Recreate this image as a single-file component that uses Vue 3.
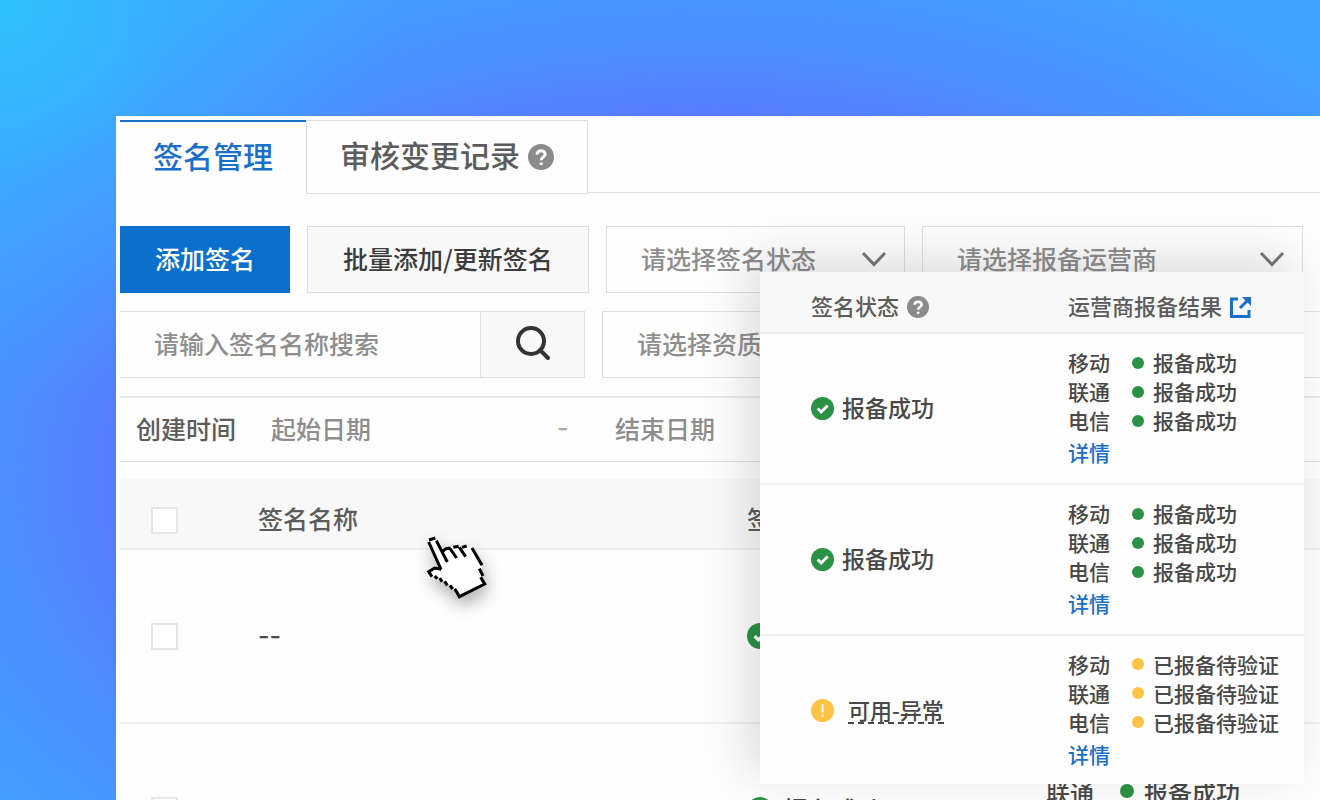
<template>
    <div class="page">
        <main class="panel">
            <nav class="tabs">
                <button type="button" class="tab active"><span>签名管理</span></button>
                <button type="button" class="tab">
                    <span>审核变更记录</span>
                    <svg class="help" viewBox="0 0 26 26" aria-hidden="true">
                        <circle cx="13" cy="13" r="13" />
                        <path d="M9 10.400C9 5.400 17.200 5.600 17.200 10.200C17.200 13 13.200 13.200 13.200 16.200" />
                        <path d="M13.200 18.600V21" />
                    </svg>
                </button>
                <div class="tabs-rest"></div>
            </nav>

            <div class="filters">
                <button type="button" class="btn primary">添加签名</button>
                <button type="button" class="btn batch">批量添加/更新签名</button>
                <div class="select-box status-select">
                    <select aria-label="签名状态">
                        <option>请选择签名状态</option>
                    </select>
                    <svg class="arrow" viewBox="0 0 26 16" aria-hidden="true"><path d="M2 2L13 13.500L24 2" /></svg>
                </div>
                <div class="select-box operator-select">
                    <select aria-label="报备运营商">
                        <option>请选择报备运营商</option>
                    </select>
                    <svg class="arrow" viewBox="0 0 26 16" aria-hidden="true"><path d="M2 2L13 13.500L24 2" /></svg>
                </div>
            </div>

            <div class="filters second">
                <div class="search">
                    <input type="text" aria-label="签名名称" placeholder="请输入签名名称搜索">
                    <button type="button" aria-label="搜索">
                        <svg viewBox="0 0 36 36" aria-hidden="true">
                            <circle cx="16" cy="16" r="13" />
                            <path d="M25 25L33 33" />
                        </svg>
                    </button>
                </div>
                <div class="select-box qualification-select">
                    <select aria-label="资质">
                        <option>请选择资质</option>
                    </select>
                </div>
            </div>

            <div class="date-row">
                <label for="start-date">创建时间</label>
                <input id="start-date" type="text" placeholder="起始日期">
                <span class="dash">-</span>
                <input type="text" aria-label="结束日期" placeholder="结束日期">
            </div>

            <table class="sign-table">
                <colgroup>
                    <col class="col-check">
                    <col class="col-name">
                    <col class="col-status">
                    <col>
                </colgroup>
                <thead>
                    <tr>
                        <th class="check-cell"><input type="checkbox" aria-label="全选"></th>
                        <th>签名名称</th>
                        <th>签名状态</th>
                        <th></th>
                    </tr>
                </thead>
                <tbody>
                    <tr v-for="row in signRows" :key="row.id">
                        <td class="check-cell"><input type="checkbox" aria-label="选择"></td>
                        <td class="name">{{ row.name }}</td>
                        <td>
                            <div class="status">
                                <svg class="status-icon" viewBox="0 0 24 24" aria-hidden="true">
                                    <circle class="green" cx="12" cy="12" r="12" />
                                    <path class="tick" d="M7 12L10.600 15.700L17.400 8.800" />
                                </svg>
                                <span>{{ row.status }}</span>
                            </div>
                        </td>
                        <td>
                            <ul class="operators">
                                <li v-for="operator in row.operators" :key="operator">
                                    <span>{{ operator }}</span><i class="dot success"></i><span>报备成功</span>
                                </li>
                            </ul>
                        </td>
                    </tr>
                </tbody>
            </table>

            <section class="result-card">
                <table class="result-table">
                    <colgroup>
                        <col class="col-result-status">
                        <col>
                    </colgroup>
                    <thead>
                        <tr>
                            <th>
                                <div class="head-cell">
                                    <span>签名状态</span>
                                    <svg class="help" viewBox="0 0 26 26" aria-hidden="true">
                                        <circle cx="13" cy="13" r="13" />
                                        <path d="M9 10.400C9 5.400 17.200 5.600 17.200 10.200C17.200 13 13.200 13.200 13.200 16.200" />
                                        <path d="M13.200 18.600V21" />
                                    </svg>
                                </div>
                            </th>
                            <th>
                                <div class="head-cell">
                                    <span>运营商报备结果</span>
                                    <svg class="external" viewBox="0 0 21 21" aria-hidden="true">
                                        <path d="M8 2H1.500V19.500H19V13" />
                                        <path d="M10 11L18 3" />
                                        <path class="head" d="M12 0H21V9Z" />
                                    </svg>
                                </div>
                            </th>
                        </tr>
                    </thead>
                    <tbody>
                        <tr v-for="result in results" :key="result.id">
                            <td>
                                <div class="status">
                                    <svg class="status-icon" viewBox="0 0 24 24" aria-hidden="true">
                                        <template v-if="result.type === 'success'">
                                            <circle class="green" cx="12" cy="12" r="12" />
                                            <path class="tick" d="M7 12L10.600 15.700L17.400 8.800" />
                                        </template>
                                        <template v-else>
                                            <circle class="yellow" cx="12" cy="12" r="12" />
                                            <path class="mark" d="M12 5.500V14M12 16.500V18.500" />
                                        </template>
                                    </svg>
                                    <span :class="{ abnormal: result.type === 'warning' }">{{ result.status }}</span>
                                </div>
                            </td>
                            <td>
                                <ul class="operators">
                                    <li v-for="operator in operators" :key="operator">
                                        <span>{{ operator }}</span><i class="dot" :class="result.type"></i><span>{{ result.report }}</span>
                                    </li>
                                </ul>
                                <a href="#" class="detail">详情</a>
                            </td>
                        </tr>
                    </tbody>
                </table>
            </section>

            <svg class="cursor" viewBox="0 0 210 216" aria-hidden="true">
                <path class="hand" d="M20 28L24 20L38 16L44 26L62 57L84 46L110 42L134 42L150 48L180 100L180 130L188 156L112 194L88 165L55 138L30 132L20 118L38 108L58 113Z" />
                <path d="M21 24L40 18M20 30L57 112M43 26L76 90M62 58L72 50L86 48M84 50L104 78M94 46L110 43M112 46L131 74M120 46L134 42M150 48L180 100M172 110L183 132M176 136L188 156L112 194L103 178M58 112L38 108L20 119L30 134M38 132L46 140M53 138L60 149M68 148L76 160M84 160L92 171M98 170L104 180" />
            </svg>
        </main>
    </div>
</template>

<script setup>
import { ref } from 'vue';

const operators = ['移动', '联通', '电信'];

const signRows = ref([
    { id: 1, name: '--', status: '', operators: [] },
    { id: 2, name: '', status: '报备成功', operators: ['联通'] },
]);

const results = ref([
    { id: 1, type: 'success', status: '报备成功', report: '报备成功' },
    { id: 2, type: 'success', status: '报备成功', report: '报备成功' },
    { id: 3, type: 'warning', status: '可用-异常', report: '已报备待验证' },
]);
</script>

<style>
body {
    margin: 0;
}
</style>

<style scoped>
* {
    box-sizing: border-box;
}

.page {
    display: flex;
    height: 100vh;
    padding: 116px 0 0 116px;
    overflow: hidden;
    font-family: "Noto Sans CJK SC", sans-serif;
    font-size: 25px;
    font-weight: 500;
    color: #484848;
    background:
        radial-gradient(circle at 0 0, #2ec2ff 0, rgba(46, 194, 255, 0.3) 180px, rgba(46, 194, 255, 0) 400px),
        radial-gradient(ellipse 900px 560px at 700px 480px, #5b6cff 0%, #5879ff 62%, #4b8eff 78%, #40a2ff 100%);
}

button,
input,
select {
    margin: 0;
    font: inherit;
    color: inherit;
    border-radius: 0;
}

.panel {
    position: relative;
    flex: 1;
    min-width: 0;
    padding: 4px 0 0 4px;
    overflow: hidden;
    background-color: #fdfdfd;
}

/* Onglets */
.tabs {
    display: flex;
    height: 74px;
}

.tab {
    display: flex;
    align-items: center;
    gap: 8px;
    padding: 0 33px;
    font-size: 30px;
    line-height: 40px;
    color: #5c5c5c;
    background: none;
    border: 1px solid #dedede;
}

.tab span {
    padding-bottom: 6px;
}

.tab.active {
    color: #1a70c8;
    border: 0;
    border-top: 2px solid #1a70c8;
}

.tabs-rest {
    flex: 1;
    height: 73px;
    border-bottom: 1px solid #dedede;
}

.help {
    width: 26px;
    height: 26px;
    fill: #8b8b8b;
}

.help path {
    fill: none;
    stroke: #fff;
    stroke-width: 3;
}

/* Filtres */
.filters {
    display: flex;
    gap: 17px;
    height: 67px;
    margin-top: 32px;
    padding-right: 17px;
}

.filters.second {
    margin-top: 18px;
    padding-right: 0;
}

.btn {
    padding: 0 0 4px;
    white-space: nowrap;
    color: #3c3c3c;
    background-color: #f8f8f8;
    border: 1px solid #dedede;
}

.btn.primary {
    width: 170px;
    color: #fff;
    background-color: #0b70cc;
    border-color: #0b70cc;
}

.btn.batch {
    width: 282px;
}

.select-box {
    position: relative;
    display: flex;
}

.select-box select {
    width: 100%;
    padding: 0 60px 3px 34px;
    color: #8e8e8e;
    appearance: none;
    background-color: #fdfdfd;
    border: 1px solid #dedede;
}

.status-select {
    width: 299px;
}

.operator-select,
.qualification-select {
    flex: 1;
}

.qualification-select {
    margin-right: -2px;
}

.arrow {
    position: absolute;
    top: 25px;
    right: 18px;
    width: 26px;
    height: 16px;
    pointer-events: none;
    fill: none;
    stroke: #777;
    stroke-width: 3;
}

.search {
    display: flex;
    width: 465px;
}

.search input {
    flex: 1;
    min-width: 0;
    padding: 0 34px 4px;
    background: none;
    border: 1px solid #dedede;
    border-width: 1px 0;
}

input::placeholder {
    color: #8e8e8e;
    opacity: 1;
}

.search button {
    display: flex;
    align-items: center;
    justify-content: center;
    width: 105px;
    padding: 0 0 3px;
    background-color: #f8f8f8;
    border: 1px solid #dedede;
}

.search svg {
    width: 36px;
    height: 36px;
    fill: none;
    stroke: #333;
    stroke-width: 4;
    stroke-linecap: round;
}

.date-row {
    display: flex;
    align-items: center;
    height: 66px;
    margin-top: 18px;
    padding: 0 0 4px 16px;
    border-top: 2px solid #e8e8e8;
    border-bottom: 1px solid #dedede;
}

.date-row label {
    margin-right: 35px;
    color: #5c5c5c;
}

.date-row input {
    width: 286px;
    padding: 0;
    background: none;
    border: 0;
}

.dash {
    width: 58px;
    font-family: Inter, sans-serif;
    color: #aaa;
}

/* Tableau des signatures */
.sign-table,
.result-table {
    width: 100%;
    table-layout: fixed;
    border-collapse: collapse;
}

.sign-table {
    margin-top: 17px;
}

.col-check {
    width: 138px;
}

.col-name {
    width: 489px;
}

.col-status {
    width: 299px;
}

th,
td {
    padding: 0;
    font-weight: 500;
    text-align: left;
}

.sign-table th {
    height: 70px;
    padding-top: 9px;
    color: #5c5c5c;
    background-color: #f8f8f8;
    border-bottom: 2px solid #efefef;
}

.sign-table th.check-cell {
    padding-top: 14px;
}

.sign-table td {
    height: 174px;
    border-bottom: 2px solid #efefef;
}

.check-cell {
    padding-left: 31px;
}

.check-cell input {
    display: block;
    width: 27px;
    height: 27px;
    appearance: none;
    background-color: #fff;
    border: 2px solid #e6e6e6;
}

.name {
    font-family: Inter, sans-serif;
}

.status {
    display: flex;
    align-items: center;
    gap: 8px;
}

.status span {
    margin-bottom: 3px;
}

.sign-table .status {
    gap: 10px;
}

.status-icon {
    width: 23px;
    height: 23px;
}

.sign-table .status-icon {
    width: 26px;
    height: 26px;
}

.green {
    fill: #2b9245;
}

.yellow {
    fill: #fdc345;
}

.tick,
.mark {
    fill: none;
    stroke: #fff;
    stroke-width: 3;
}

.mark {
    stroke-width: 2;
}

.operators {
    margin: 0;
    padding: 0;
    list-style: none;
}

.operators li {
    display: flex;
    align-items: center;
    line-height: 29px;
}

.sign-table .operators {
    padding-bottom: 38px;
    font-size: 24px;
}

.sign-table .operators li {
    line-height: 33px;
}

.dot {
    flex: none;
    width: 12px;
    height: 12px;
    margin: 0 9px 0 22px;
    border-radius: 50%;
}

.sign-table .dot {
    width: 14px;
    height: 14px;
    margin: 0 10px 0 26px;
}

.dot.success {
    background-color: #2b9245;
}

.dot.warning {
    background-color: #fdc345;
}

/* Carte des résultats au-dessus du tableau */
.result-card {
    position: absolute;
    top: 156px;
    right: 16px;
    width: 544px;
    background-color: #fdfdfd;
    box-shadow: -12px -12px 44px rgba(0, 0, 0, 0.13);
}

.col-result-status {
    width: 308px;
}

.result-table th {
    height: 61px;
    padding-top: 10px;
    font-size: 22px;
    color: #5c5c5c;
    background-color: #f8f8f8;
    border-bottom: 2px solid #efefef;
}

.result-table th:first-child,
.result-table td:first-child {
    padding-bottom: 0;
    padding-left: 51px;
}

.head-cell {
    display: flex;
    align-items: center;
    gap: 8px;
}

.head-cell span {
    padding-bottom: 4px;
}

.head-cell .help {
    width: 22px;
    height: 22px;
}

.external {
    width: 21px;
    height: 21px;
    fill: none;
    stroke: #1a70c8;
    stroke-width: 3;
}

.external .head {
    fill: #1a70c8;
    stroke: none;
}

.result-table td {
    height: 151px;
    padding-bottom: 2px;
    font-size: 21px;
    border-bottom: 2px solid #efefef;
}

.result-table tbody tr:last-child td {
    height: 149px;
    border-bottom: 0;
}

.result-table .status {
    font-size: 23px;
}

.result-table .status .abnormal {
    margin-bottom: 0;
    margin-left: 6px;
    font-size: 22px;
    line-height: 26px;
    border-bottom: 2px dashed #484848;
}

.detail {
    display: block;
    width: 42px;
    margin-top: 3px;
    line-height: 29px;
    color: #1a70c8;
    text-decoration: none;
}

/* Curseur */
.cursor {
    position: absolute;
    top: 416px;
    left: 306px;
    width: 70px;
    height: 72px;
    overflow: visible;
    fill: none;
    stroke: #000;
    stroke-width: 9;
    filter: drop-shadow(2px 8px 8px rgba(0, 0, 0, 0.3));
}

.cursor .hand {
    fill: #fff;
    stroke: none;
}
</style>
